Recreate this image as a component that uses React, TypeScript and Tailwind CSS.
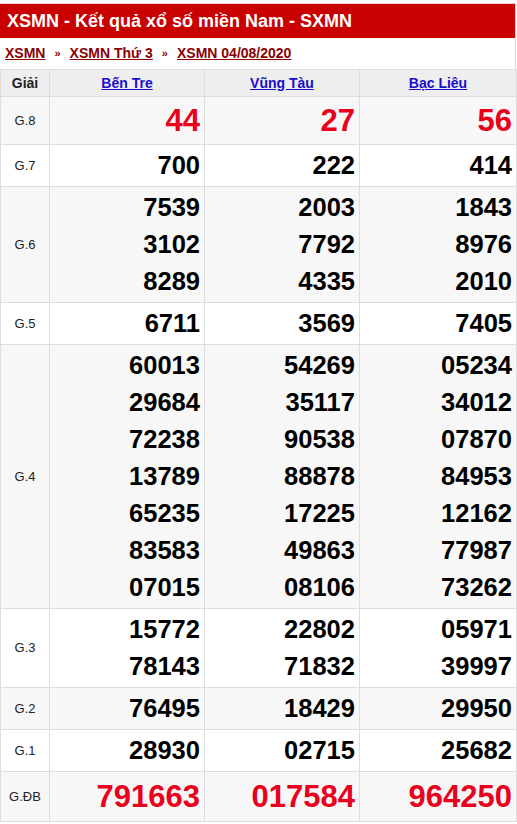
const stations = ["Bến Tre", "Vũng Tàu", "Bạc Liêu"];

type Prize = { label: string; values: string[][]; big?: boolean; special?: boolean };

const prizes: Prize[] = [
  { label: "G.8", values: [["44"], ["27"], ["56"]], big: true },
  { label: "G.7", values: [["700"], ["222"], ["414"]] },
  { label: "G.6", values: [["7539", "3102", "8289"], ["2003", "7792", "4335"], ["1843", "8976", "2010"]] },
  { label: "G.5", values: [["6711"], ["3569"], ["7405"]] },
  {
    label: "G.4",
    values: [
      ["60013", "29684", "72238", "13789", "65235", "83583", "07015"],
      ["54269", "35117", "90538", "88878", "17225", "49863", "08106"],
      ["05234", "34012", "07870", "84953", "12162", "77987", "73262"],
    ],
  },
  { label: "G.3", values: [["15772", "78143"], ["22802", "71832"], ["05971", "39997"]] },
  { label: "G.2", values: [["76495"], ["18429"], ["29950"]] },
  { label: "G.1", values: [["28930"], ["02715"], ["25682"]] },
  { label: "G.ĐB", values: [["791663"], ["017584"], ["964250"]], special: true },
];

export default function App() {
  return (
    <div className="bg-white w-[517px] h-[824px] pt-[3px] font-['Liberation_Sans',Arial,sans-serif]">
      <div className="w-[516px] border-t border-r border-[#f0d0d0]">
        <h1 className="bg-[#c80000] text-white font-bold text-[18px] h-[34px] leading-[34px] px-[7px]">
          XSMN - Kết quả xổ số miền Nam - SXMN
        </h1>
        <div className="h-[31px] flex items-center gap-[9px] px-[5px] text-[14px] font-bold text-[#8b0000]">
          <a className="underline">XSMN</a>
          <span className="text-[11px]">»</span>
          <a className="underline">XSMN Thứ 3</a>
          <span className="text-[11px]">»</span>
          <a className="underline">XSMN 04/08/2020</a>
        </div>
        <table className="w-[516px] border-collapse table-fixed">
          <colgroup>
            <col className="w-[49px]" />
            <col className="w-[155px]" />
            <col className="w-[155px]" />
            <col className="w-[157px]" />
          </colgroup>
          <thead>
            <tr className="bg-[#eeeeee] h-[27px]">
              <th className="border border-[#dddddd] text-[14px] font-bold text-[#222]">Giải</th>
              {stations.map((s) => (
                <th key={s} className="border border-[#dddddd] text-[14px] font-bold">
                  <a className="text-[#1a0dcc] underline">{s}</a>
                </th>
              ))}
            </tr>
          </thead>
          <tbody>
            {prizes.map((p, i) => (
              <tr key={p.label} className={i % 2 === 0 ? "bg-[#f7f7f7]" : "bg-white"}>
                <td className="border border-[#dddddd] text-center text-[13px] text-[#222]">{p.label}</td>
                {p.values.map((col, j) => (
                  <td key={j} className="border border-[#dddddd] text-right pr-[4px] py-[2px] align-middle">
                    {col.map((v) => (
                      <div
                        key={v}
                        className={
                          p.big
                            ? "text-[31px] leading-[43px] font-bold text-[#e8001c]"
                            : p.special
                            ? "text-[31px] leading-[45px] font-bold text-[#e8001c]"
                            : "text-[25.5px] leading-[37px] font-bold text-black"
                        }
                      >
                        {v}
                      </div>
                    ))}
                  </td>
                ))}
              </tr>
            ))}
          </tbody>
        </table>
      </div>
    </div>
  );
}
